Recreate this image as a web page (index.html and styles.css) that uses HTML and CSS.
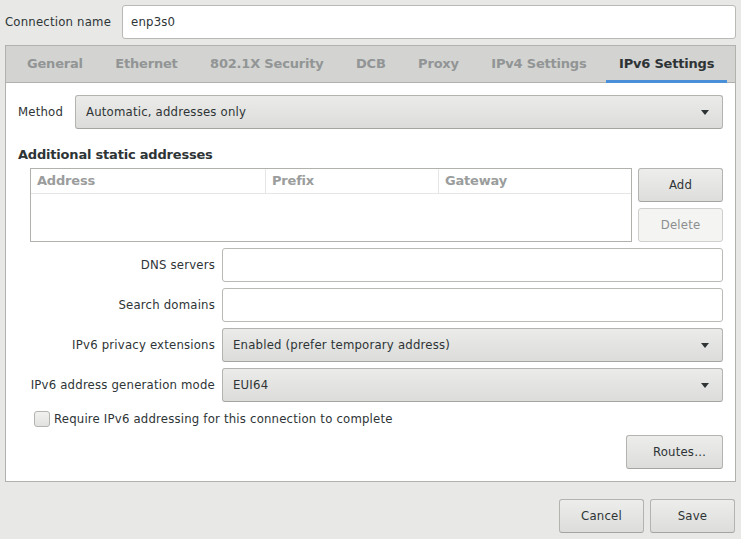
FILE: index.html
```html
<!DOCTYPE html>
<html lang="en">
<head>
  <meta charset="UTF-8">
  <title>Editing enp3s0</title>
  <link rel="stylesheet" href="styles.css">
</head>
<body>

  <div class="dialog">
    <div class="name-row">
      <label class="name-label">Connection name</label>
      <div class="entry name-entry">enp3s0</div>
    </div>

    <div class="notebook">
      <div class="tabs">
        <div class="tab">General</div>
        <div class="tab">Ethernet</div>
        <div class="tab">802.1X Security</div>
        <div class="tab">DCB</div>
        <div class="tab">Proxy</div>
        <div class="tab">IPv4 Settings</div>
        <div class="tab active">IPv6 Settings</div>
      </div>

      <div class="page">
        <div class="method-row">
          <span class="method-label">Method</span>
          <div class="combo">
            <span>Automatic, addresses only</span>
            <span class="arrow"></span>
          </div>
        </div>

        <div class="section-title">Additional static addresses</div>

        <div class="addresses">
          <div class="table">
            <div class="table-head">
              <div class="col col-address">Address</div>
              <div class="col col-prefix">Prefix</div>
              <div class="col col-gateway">Gateway</div>
            </div>
          </div>
          <div class="side-buttons">
            <button class="btn">Add</button>
            <button class="btn" disabled>Delete</button>
          </div>
        </div>

        <div class="form">
          <label class="form-label">DNS servers</label>
          <div class="entry"></div>

          <label class="form-label">Search domains</label>
          <div class="entry"></div>

          <label class="form-label">IPv6 privacy extensions</label>
          <div class="combo">
            <span>Enabled (prefer temporary address)</span>
            <span class="arrow"></span>
          </div>

          <label class="form-label">IPv6 address generation mode</label>
          <div class="combo">
            <span>EUI64</span>
            <span class="arrow"></span>
          </div>
        </div>

        <div class="check-row">
          <span class="checkbox"></span>
          <span class="check-text">Require IPv6 addressing for this connection to complete</span>
        </div>

        <div class="routes-row">
          <button class="btn routes-btn">Routes…</button>
        </div>
      </div>
    </div>

    <div class="dialog-buttons">
      <button class="btn">Cancel</button>
      <button class="btn">Save</button>
    </div>
  </div>

</body>
</html>
```

FILE: styles.css
```css
body {
  margin: 0;
  background-color: #e8e8e7;
  font-family: "DejaVu Sans Condensed", "DejaVu Sans", sans-serif;
  font-stretch: condensed;
  font-size: 13px;
  letter-spacing: 0.2px;
  color: #2e3436;
}

.dialog {
  display: flex;
  flex-direction: column;
  padding: 5px 5px 0 5px;
}

/* Connection name */
.name-row {
  display: flex;
  align-items: center;
}

.name-label {
  width: 117px;
  flex-shrink: 0;
  padding-bottom: 2px;
}

.entry {
  box-sizing: border-box;
  height: 34px;
  display: flex;
  align-items: center;
  padding: 0 8px 2px;
  background-color: #fff;
  border: 1px solid #b9b9b6;
  border-radius: 3px;
}

.name-entry {
  flex: 1;
}

/* Notebook */
.notebook {
  margin-top: 6px;
  border: 1px solid #b1b1ae;
  background-color: #fff;
}

.tabs {
  display: flex;
  gap: 6.5px;
  height: 36px;
  padding-left: 8px;
  background-color: #d3d3d1;
  border-bottom: 1px solid #b1b1ae;
}

.tab {
  display: flex;
  align-items: center;
  height: 36px;
  padding: 0 13px 2px;
  box-sizing: border-box;
  font-family: "DejaVu Sans", sans-serif;
  font-stretch: normal;
  font-weight: bold;
  letter-spacing: -0.2px;
  color: #929595;
}

.tab.active {
  height: 37px;
  padding-bottom: 3px;
  color: #2e3436;
  box-shadow: inset 0 -3px 0 #4a90d9;
}

.page {
  padding: 12px;
}

/* Method */
.method-row {
  display: flex;
  align-items: center;
}

.method-label {
  width: 57px;
  flex-shrink: 0;
  padding-bottom: 2px;
}

.combo {
  flex: 1;
  box-sizing: border-box;
  height: 34px;
  display: flex;
  align-items: center;
  justify-content: space-between;
  padding: 0 10px 2px;
  background: linear-gradient(#ebebe9, #dcdcda);
  border: 1px solid #b3b3b0;
  border-bottom-color: #a4a4a1;
  border-radius: 3px;
}

.arrow {
  width: 0;
  height: 0;
  border-left: 4px solid transparent;
  border-right: 4px solid transparent;
  border-top: 5px solid #2e3436;
  margin: 2px 3px 0 0;
}

.section-title {
  margin: 18px 0 5px;
  line-height: 16px;
  font-family: "DejaVu Sans", sans-serif;
  font-stretch: normal;
  font-weight: bold;
  letter-spacing: -0.2px;
}

/* Addresses table */
.addresses {
  display: flex;
  gap: 6px;
  margin-left: 12px;
}

.table {
  flex: 1;
  height: 74px;
  box-sizing: border-box;
  border: 1px solid #b1b1ae;
  background-color: #fff;
}

.table-head {
  display: flex;
  height: 24px;
  border-bottom: 1px solid #e6e6e4;
  font-family: "DejaVu Sans", sans-serif;
  font-stretch: normal;
  font-weight: bold;
  letter-spacing: -0.2px;
  color: #9b9d9d;
}

.col {
  display: flex;
  align-items: center;
  padding: 0 6px 2px;
  box-sizing: border-box;
}

.col-address {
  width: 235px;
  border-right: 1px solid #e6e6e4;
}

.col-prefix {
  width: 173px;
  border-right: 1px solid #e6e6e4;
}

.col-gateway {
  flex: 1;
}

.side-buttons {
  display: flex;
  flex-direction: column;
  gap: 6px;
  width: 85px;
}

.btn {
  box-sizing: border-box;
  height: 34px;
  font-family: inherit;
  font-stretch: condensed;
  font-size: 13px;
  letter-spacing: 0.2px;
  color: #2e3436;
  background: linear-gradient(#ededeb, #dddddb);
  border: 1px solid #b3b3b0;
  border-bottom-color: #a4a4a1;
  border-radius: 3px;
  padding: 0 0 2px;
}

.btn:disabled {
  background: #f4f4f2;
  color: #8b8e8f;
  border-color: #cfcfcc;
}

/* Form rows */
.form {
  display: grid;
  grid-template-columns: 197px 1fr;
  column-gap: 7px;
  row-gap: 6px;
  margin-top: 6px;
  align-items: center;
}

.form-label {
  text-align: right;
  padding-bottom: 2px;
}

.check-row {
  display: flex;
  align-items: center;
  gap: 4px;
  height: 16px;
  margin: 9px 0 0 16px;
}

.check-text {
  padding-bottom: 2px;
}

.checkbox {
  width: 16px;
  height: 16px;
  box-sizing: border-box;
  border: 1px solid #b3b3b0;
  border-radius: 3px;
  background: linear-gradient(#f1f1ef, #e2e2e0);
}

.routes-row {
  display: flex;
  justify-content: flex-end;
  margin-top: 8px;
}

.routes-btn {
  width: 97px;
  padding-left: 10px;
}

/* Dialog buttons */
.dialog-buttons {
  display: flex;
  justify-content: flex-end;
  gap: 6px;
  margin-top: 17px;
  padding-right: 1px;
}

.dialog-buttons .btn {
  width: 85px;
}
```
